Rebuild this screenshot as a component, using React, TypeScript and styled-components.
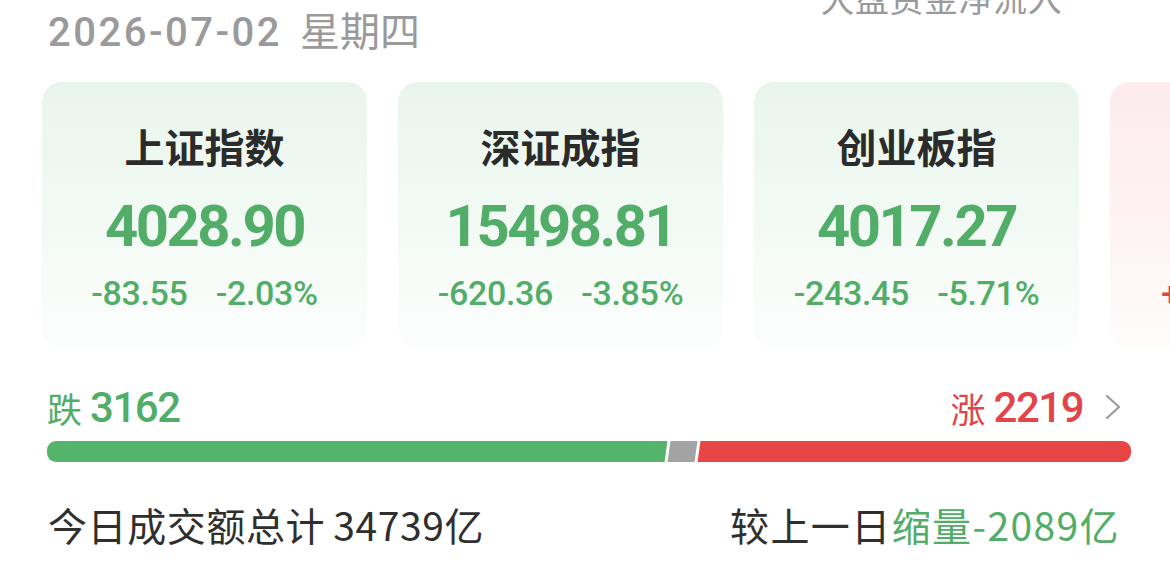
import React from 'react'
import styled, { createGlobalStyle } from 'styled-components'

const GlobalStyle = createGlobalStyle`
  html, body {
    margin: 0;
    padding: 0;
    background: #fff;
  }
  body {
    font-family: Roboto, "Noto Sans CJK SC", sans-serif;
    overflow: hidden;
  }
`

const green = '#52ad69'
const red = '#e2444a'
const cjk = `"Noto Sans CJK SC", sans-serif`
const num = `Roboto, "Noto Sans CJK SC", sans-serif`

type Trend = 'up' | 'down'

interface IndexItem {
  name: string
  value: string
  change: string
  rate: string
  trend: Trend
}

const indexList: IndexItem[] = [
  { name: '上证指数', value: '4028.90', change: '-83.55', rate: '-2.03%', trend: 'down' },
  { name: '深证成指', value: '15498.81', change: '-620.36', rate: '-3.85%', trend: 'down' },
  { name: '创业板指', value: '4017.27', change: '-243.45', rate: '-5.71%', trend: 'down' },
  { name: '科创50', value: '1032.18', change: '+2.56', rate: '+0.25%', trend: 'up' },
]

// 涨跌家数
const fallCount = 3162
const flatCount = 138
const riseCount = 2219

const Page = styled.main`
  width: 1170px;
  height: 561px;
  overflow: hidden;
`

const Header = styled.div`
  display: flex;
  justify-content: space-between;
  align-items: flex-start;
  padding: 0 108px 0 48px;
`

const DateText = styled.div`
  font-family: ${num};
  font-size: 40px;
  line-height: 58px;
  font-weight: 500;
  color: #9a9a9a;
  letter-spacing: 2.5px;
  white-space: nowrap;

  span {
    font-family: ${cjk};
    font-weight: 400;
    letter-spacing: 0;
    margin-left: 18px;
  }
`

const SectionTitle = styled.div`
  font-family: ${cjk};
  font-size: 34px;
  line-height: 34px;
  color: #9a9a9a;
  margin-top: -19px;
  letter-spacing: 0.5px;
`

const CardRow = styled.div`
  display: flex;
  gap: 31px;
  padding-left: 42px;
  margin-top: 20px;
  overflow: hidden;
`

const Card = styled.div<{ $trend: Trend }>`
  flex: 0 0 325px;
  height: 266px;
  box-sizing: border-box;
  border-radius: 20px;
  background: ${(props) =>
    props.$trend === 'down'
      ? 'linear-gradient(180deg, #e8f5ec 0%, #f3faf5 55%, #fcfefd 100%)'
      : 'linear-gradient(180deg, #fdebee 0%, #fdf3f4 55%, #fffcfc 100%)'};
  display: flex;
  flex-direction: column;
  align-items: center;
  padding-top: 38px;
`

const CardName = styled.div`
  font-family: ${cjk};
  font-size: 40px;
  line-height: 52px;
  font-weight: 700;
  color: #2b2b2b;
`

const CardValue = styled.div<{ $trend: Trend }>`
  font-family: ${num};
  font-size: 58px;
  line-height: 72px;
  font-weight: 700;
  letter-spacing: -2.5px;
  color: ${(props) => (props.$trend === 'down' ? green : red)};
  margin-top: 18px;
`

const CardChange = styled.div<{ $trend: Trend }>`
  display: flex;
  gap: 28px;
  font-family: ${num};
  font-size: 34px;
  line-height: 40px;
  font-weight: 500;
  letter-spacing: -0.3px;
  color: ${(props) => (props.$trend === 'down' ? green : red)};
  margin-top: 11px;
`

const Stats = styled.section`
  padding: 0 39px 0 47px;
  margin-top: 38px;
`

const StatLabels = styled.div`
  display: flex;
  justify-content: space-between;
  align-items: center;
  height: 42px;
`

const StatLabel = styled.div<{ $trend: Trend }>`
  display: flex;
  align-items: center;
  color: ${(props) => (props.$trend === 'down' ? green : red)};
  white-space: nowrap;

  em {
    font-style: normal;
    font-family: ${cjk};
    font-size: 35px;
    margin-right: 8px;
  }

  b {
    font-family: ${num};
    font-size: 42px;
    font-weight: 500;
    letter-spacing: -1.5px;
  }
`

const Chevron = styled.svg`
  width: 16px;
  height: 26px;
  margin-left: 22px;
  margin-right: 10px;
`

const Bar = styled.div`
  display: flex;
  gap: 3px;
  height: 21px;
  margin-top: 13px;
  border-radius: 9px;
  overflow: hidden;
`

const Segment = styled.div<{ $color: string }>`
  background: ${(props) => props.$color};
  transform: skewX(-8deg);
  min-width: 0;

  &:first-child {
    margin-left: -6px;
  }
  &:last-child {
    margin-right: -6px;
  }
`

const Turnover = styled.div`
  display: flex;
  justify-content: space-between;
  align-items: center;
  padding: 0 50px 0 48px;
  margin-top: 38px;
  font-family: ${cjk};
  font-size: 39px;
  line-height: 48px;
  letter-spacing: 0.6px;
  color: #2f2f2f;
  white-space: nowrap;
`

const Amount = styled.span`
  margin-left: 8px;
`

const Highlight = styled.span`
  color: ${green};
`

const Compare = styled.span`
  letter-spacing: 1.4px;
`

const IndexCard = ({ item }: { item: IndexItem }) => (
  <Card $trend={item.trend}>
    <CardName>{item.name}</CardName>
    <CardValue $trend={item.trend}>{item.value}</CardValue>
    <CardChange $trend={item.trend}>
      <span>{item.change}</span>
      <span>{item.rate}</span>
    </CardChange>
  </Card>
)

const App = () => {
  return (
    <Page>
      <GlobalStyle />
      <Header>
        <DateText>
          2026-07-02<span>星期四</span>
        </DateText>
        <SectionTitle>大盘资金净流入</SectionTitle>
      </Header>

      <CardRow>
        {indexList.map((item) => (
          <IndexCard key={item.name} item={item} />
        ))}
      </CardRow>

      <Stats>
        <StatLabels>
          <StatLabel $trend="down">
            <em>跌</em>
            <b>{fallCount}</b>
          </StatLabel>
          <StatLabel $trend="up">
            <em>涨</em>
            <b>{riseCount}</b>
            <Chevron viewBox="0 0 16 26" fill="none">
              <path d="M2 2 L14 13 L2 24" stroke="#9b9b9b" strokeWidth="2.2" strokeLinecap="round" strokeLinejoin="round" />
            </Chevron>
          </StatLabel>
        </StatLabels>
        <Bar>
          <Segment $color="#55b46b" style={{ flex: fallCount }} />
          <Segment $color="#a3a3a3" style={{ flex: flatCount }} />
          <Segment $color="#e84646" style={{ flex: riseCount }} />
        </Bar>
      </Stats>

      <Turnover>
        <span>
          今日成交额总计<Amount>34739亿</Amount>
        </span>
        <Compare>
          较上一日<Highlight>缩量-2089亿</Highlight>
        </Compare>
      </Turnover>
    </Page>
  )
}

export default App
